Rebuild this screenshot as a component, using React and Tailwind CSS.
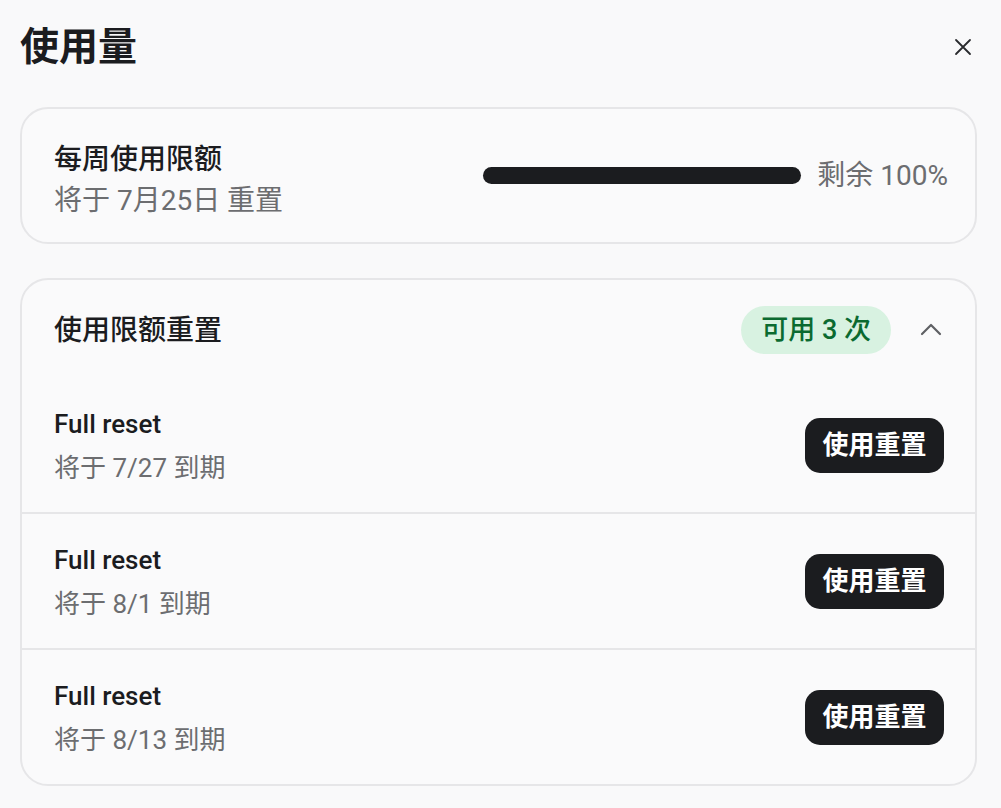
import React from "react";

const resets = [
  { label: "Full reset", expires: "将于 7/27 到期" },
  { label: "Full reset", expires: "将于 8/1 到期" },
  { label: "Full reset", expires: "将于 8/13 到期" },
];

const CloseIcon = () => (
  <svg width="20" height="20" viewBox="0 0 20 20" fill="none" stroke="#2a2b2e" strokeWidth="1.8" strokeLinecap="round">
    <path d="M3 3L17 17M17 3L3 17" />
  </svg>
);

const ChevronUp = () => (
  <svg width="24" height="24" viewBox="0 0 24 24" fill="none" stroke="#5f6064" strokeWidth="2.2" strokeLinecap="round" strokeLinejoin="round">
    <path d="M3 16L12 7L21 16" />
  </svg>
);

const App = () => {
  return (
    <div className="min-h-screen w-full bg-[#f9f9fa] text-[#1b1c1f] font-[family-name:Roboto,'Noto_Sans_CJK_SC',sans-serif]">
      <div className="pl-[20px] pr-[24px]">
        <div className="flex items-center justify-between h-[94px]">
          <h1 className="text-[39px] font-bold leading-none">使用量</h1>
          <button className="p-[4px]">
            <CloseIcon />
          </button>
        </div>

        <div className="mt-[13px] h-[137px] rounded-[28px] border-2 border-[#e6e6e8] bg-[#fafafb] pl-[32px] pr-[27px] flex items-center justify-between">
          <div className="flex flex-col pt-[8px]">
            <span className="text-[28px] font-medium leading-[41px]">每周使用限额</span>
            <span className="text-[28px] leading-[41px] text-[#6c6d70]">将于 7月25日 重置</span>
          </div>
          <div className="flex items-center gap-[16px]">
            <div className="w-[318px] h-[17px] rounded-full bg-[#1b1c1f]" />
            <span className="text-[28px] leading-[41px] text-[#6c6d70]">剩余 100%</span>
          </div>
        </div>

        <div className="mt-[34px] rounded-[28px] border-2 border-[#e6e6e8] bg-[#fafafb]">
          <div className="h-[98px] pl-[32px] pr-[32px] pt-[2px] flex items-center justify-between">
            <span className="text-[28px] font-medium leading-[41px]">使用限额重置</span>
            <div className="flex items-center gap-[28px]">
              <div className="h-[48px] px-[20px] rounded-full bg-[#d8f2e1] text-[#0b6a30] text-[27px] font-medium flex items-center">
                <span className="leading-[40px]">可用 3 次</span>
              </div>
              <ChevronUp />
            </div>
          </div>
          {resets.map((r, i) => (
            <div
              key={i}
              className={
                "pl-[32px] pr-[31px] flex items-center justify-between " +
                (i === 0 ? "h-[134px]" : "h-[136px] border-t-2 border-[#e6e6e8]")
              }
            >
              <div className="flex flex-col pt-[2px]">
                <span className="text-[26px] font-medium leading-[42px]">{r.label}</span>
                <span className="mt-[2px] text-[26px] leading-[42px] text-[#6c6d70]">{r.expires}</span>
              </div>
              <button className="h-[55px] w-[139px] rounded-[15px] bg-[#1b1c1f] text-white text-[26px] font-bold">
                使用重置
              </button>
            </div>
          ))}
        </div>
      </div>
    </div>
  );
};

export default App;
